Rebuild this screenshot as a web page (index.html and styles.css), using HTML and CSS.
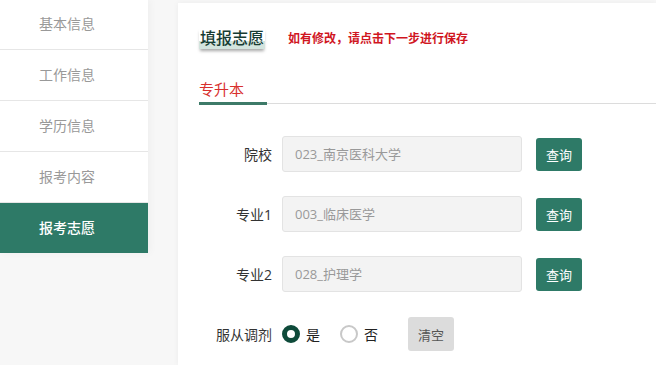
FILE: index.html
```html
<!DOCTYPE html>
<html lang="zh-CN">
<head>
<meta charset="utf-8">
<link rel="stylesheet" href="styles.css">
</head>
<body>
<div class="layout">
  <nav class="sidebar">
    <div class="nav-item">基本信息</div>
    <div class="nav-item">工作信息</div>
    <div class="nav-item">学历信息</div>
    <div class="nav-item">报考内容</div>
    <div class="nav-item active">报考志愿</div>
  </nav>
  <main class="card">
    <div class="header">
      <span class="title">填报志愿</span>
      <span class="notice">如有修改，请点击下一步进行保存</span>
    </div>
    <div class="tabs">
      <div class="tab active">专升本</div>
    </div>
    <div class="form">
      <div class="row">
        <label class="label">院校</label>
        <div class="input">023_南京医科大学</div>
        <button class="btn">查询</button>
      </div>
      <div class="row">
        <label class="label">专业1</label>
        <div class="input">003_临床医学</div>
        <button class="btn">查询</button>
      </div>
      <div class="row">
        <label class="label">专业2</label>
        <div class="input">028_护理学</div>
        <button class="btn">查询</button>
      </div>
      <div class="row">
        <label class="label">服从调剂</label>
        <span class="radio checked"></span><span class="radio-text">是</span>
        <span class="radio"></span><span class="radio-text">否</span>
        <button class="btn-clear">清空</button>
      </div>
    </div>
  </main>
</div>
</body>
</html>
```
FILE: styles.css
```css
html, body {
  margin: 0;
  padding: 0;
  background: #f7f7f7;
  font-family: "Open Sans", "Noto Sans CJK SC", sans-serif;
  overflow: hidden;
}
.layout {
  display: flex;
  align-items: flex-start;
  gap: 30px;
  height: 365px;
}
.sidebar {
  width: 148px;
  flex: none;
  background: #fff;
  margin-top: -1px;
  box-shadow: 2px 0 8px rgba(0,0,0,0.04);
}
.nav-item {
  height: 50px;
  line-height: 50px;
  border-bottom: 1px solid #e6e6e6;
  text-align: center;
  padding-right: 14px;
  font-size: 14px;
  color: #999;
}
.nav-item.active {
  background: #2e7a67;
  color: #fff;
  border-bottom: none;
  font-weight: 500;
}
.card {
  flex: 1;
  box-sizing: border-box;
  background: #fff;
  margin-top: 3px;
  height: 362px;
  padding: 20px 0 0 21px;
  box-shadow: 0 0 6px rgba(0,0,0,0.05);
}
.header {
  display: flex;
  align-items: center;
  height: 30px;
}
.title {
  font-size: 16px;
  line-height: 21px;
  color: #173c33;
  font-weight: 500;
  padding: 0 1px;
  background: linear-gradient(transparent 60%, #d3e4de 60%);
  box-shadow: 0 3px 3px -1px rgba(0,0,0,0.35);
}
.notice {
  margin-left: 23px;
  font-size: 12px;
  font-weight: 700;
  color: #d0161f;
}
.tabs {
  margin-top: 25px;
  border-bottom: 1px solid #dcdcdc;
  display: flex;
}
.tab {
  font-size: 15px;
  color: #d8302e;
  width: 68px;
  line-height: 22px;
  padding-bottom: 2px;
  border-bottom: 3px solid #3d7a68;
  margin-bottom: -2px;
}
.form {
  padding-top: 32px;
}
.row {
  display: flex;
  align-items: center;
  height: 36px;
  margin-bottom: 24px;
}
.label {
  width: 73px;
  text-align: right;
  font-size: 14px;
  color: #333;
  margin-right: 10px;
}
.input {
  width: 226px;
  height: 34px;
  line-height: 34px;
  padding-left: 12px;
  background: #f3f3f3;
  border: 1px solid #e3e3e3;
  border-radius: 3px;
  font-size: 13px;
  color: #999;
}
.btn {
  margin-left: 14px;
  width: 46px;
  height: 33px;
  border: none;
  border-radius: 3px;
  background: #2e7a67;
  color: #fff;
  font-family: inherit;
  font-size: 13px;
  padding: 0;
}
.radio {
  width: 18px;
  height: 18px;
  box-sizing: border-box;
  border-radius: 50%;
  border: 2px solid #c8c8c8;
  background: #fff;
}
.radio.checked {
  border: 5px solid #0e4a3a;
}
.radio-text {
  font-size: 14px;
  color: #222;
  margin-left: 6px;
  margin-right: 20px;
}
.btn-clear {
  margin-left: 10px;
  width: 46px;
  height: 34px;
  border: none;
  border-radius: 3px;
  background: #dcdcdc;
  color: #555;
  font-family: inherit;
  font-size: 13px;
  padding: 0;
}
```
